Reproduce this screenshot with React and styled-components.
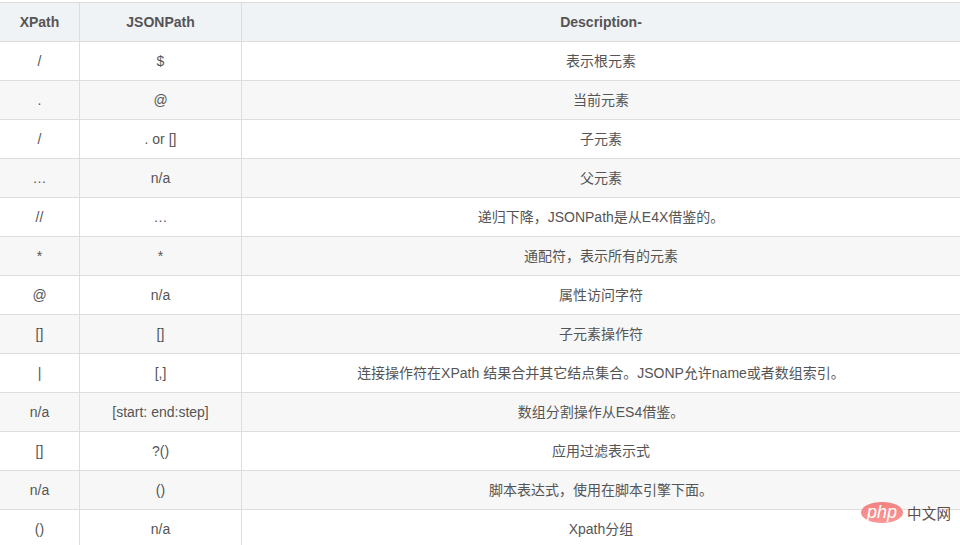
import React from "react";
import styled, { createGlobalStyle } from "styled-components";

const GlobalStyle = createGlobalStyle`
  html, body {
    margin: 0;
    padding: 0;
    background: #fff;
    overflow: hidden;
  }
  body {
    font-family: "Liberation Sans", Arial, "Noto Sans CJK SC", sans-serif;
    font-size: 14px;
    color: #555;
  }
`;

const Page = styled.div`
  position: relative;
  width: 960px;
  height: 545px;
  overflow: hidden;
  padding-top: 2px;
  box-sizing: border-box;
`;

const Table = styled.table`
  border-collapse: collapse;
  table-layout: fixed;
  width: 962px;
  margin-left: -1px;
`;

const HeadCell = styled.th`
  height: 38px;
  padding: 0;
  border: 1px solid #ddd;
  background: #f0f3f6;
  font-weight: 700;
  font-size: 14px;
  color: #555;
  text-align: center;
`;

const Row = styled.tr`
  background: ${({ $odd }) => ($odd ? "#f7f7f7" : "#fff")};
`;

const Cell = styled.td`
  height: 38px;
  padding: 0;
  border: 1px solid #ddd;
  text-align: center;
  font-size: 14px;
  line-height: 20px;
  color: #555;
`;

const Watermark = styled.div`
  position: absolute;
  left: 861px;
  top: 502px;
  display: flex;
  align-items: center;
  gap: 4px;
`;

const PhpBadge = styled.span`
  display: flex;
  align-items: center;
  justify-content: center;
  width: 42px;
  height: 21px;
  border-radius: 50%;
  background: linear-gradient(180deg, #f28282, #fd9696);
  color: #fff;
  font-family: "Liberation Sans", sans-serif;
  font-style: italic;
  font-size: 18px;
  line-height: 19px;
`;

const SiteName = styled.span`
  font-family: "Noto Sans CJK SC", sans-serif;
  font-size: 14.5px;
  letter-spacing: 0.3px;
  color: #4a3b3b;
  opacity: 0.9;
`;

const rows = [
  ["/", "$", "表示根元素"],
  [".", "@", "当前元素"],
  ["/", ". or []", "子元素"],
  ["…", "n/a", "父元素"],
  ["//", "…", "递归下降，JSONPath是从E4X借鉴的。"],
  ["*", "*", "通配符，表示所有的元素"],
  ["@", "n/a", "属性访问字符"],
  ["[]", "[]", "子元素操作符"],
  ["|", "[,]", "连接操作符在XPath 结果合并其它结点集合。JSONP允许name或者数组索引。"],
  ["n/a", "[start: end:step]", "数组分割操作从ES4借鉴。"],
  ["[]", "?()", "应用过滤表示式"],
  ["n/a", "()", "脚本表达式，使用在脚本引擎下面。"],
  ["()", "n/a", "Xpath分组"],
];

const App = () => {
  return (
    <Page>
      <GlobalStyle />
      <Table>
        <colgroup>
          <col style={{ width: 80 }} />
          <col style={{ width: 162 }} />
          <col />
        </colgroup>
        <thead>
          <tr>
            <HeadCell>XPath</HeadCell>
            <HeadCell>JSONPath</HeadCell>
            <HeadCell>Description-</HeadCell>
          </tr>
        </thead>
        <tbody>
          {rows.map((row, i) => (
            <Row key={i} $odd={i % 2 === 1}>
              {row.map((text, j) => (
                <Cell key={j}>{text}</Cell>
              ))}
            </Row>
          ))}
        </tbody>
      </Table>
      <Watermark>
        <PhpBadge>php</PhpBadge>
        <SiteName>中文网</SiteName>
      </Watermark>
    </Page>
  );
};

export default App;
